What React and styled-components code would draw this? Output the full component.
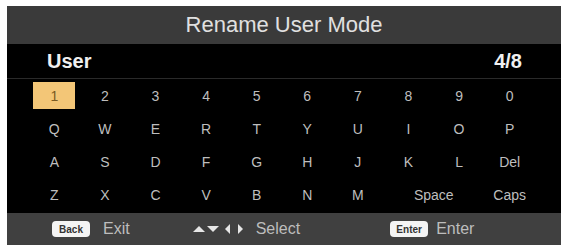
import React from "react";
import styled, { createGlobalStyle } from "styled-components";

const GlobalStyle = createGlobalStyle`
  body {
    margin: 0;
    background: #ffffff;
    font-family: "Liberation Sans", Arial, sans-serif;
  }
`;

const Panel = styled.div`
  width: 554px;
  margin: 6px 0 0 7px;
  background: #000;
`;

const Header = styled.div`
  height: 38px;
  background: #3a3a3a;
  color: #e0e0e0;
  font-size: 22px;
  display: flex;
  align-items: center;
  justify-content: center;
`;

const NameRow = styled.div`
  height: 34px;
  padding: 0 39px 0 40px;
  display: flex;
  align-items: center;
  justify-content: space-between;
  color: #f0f0f0;
  font-size: 20px;
  font-weight: bold;
  border-bottom: 1px solid #2a2a2a;
`;

const Keys = styled.div`
  display: grid;
  grid-template-columns: repeat(10, 50.6px);
  grid-auto-rows: 33px;
  padding: 0 0 2px 22px;
`;

const Key = styled.div`
  grid-column: span ${(p) => p.span || 1};
  display: flex;
  align-items: center;
  justify-content: center;
  color: #bebebe;
  font-size: 14px;
`;

const Selected = styled.span`
  width: 42px;
  height: 27px;
  background: #f3c677;
  color: #7a5a22;
  display: flex;
  align-items: center;
  justify-content: center;
`;

const Footer = styled.div`
  height: 32px;
  background: #404040;
  display: flex;
  align-items: center;
  padding-left: 45px;
  color: #bdbdbd;
  font-size: 16px;
`;

const Hint = styled.div`
  display: flex;
  align-items: center;
  gap: ${(p) => p.gap || 12}px;
  margin-left: ${(p) => p.offset || 0}px;
`;

const Badge = styled.span`
  height: 16px;
  padding: 0 4px;
  min-width: 30px;
  border-radius: 4px;
  background: #f4f4f4;
  color: #333;
  font-size: 10px;
  font-weight: bold;
  display: flex;
  align-items: center;
  justify-content: center;
`;

const Arrows = styled.svg`
  display: block;
`;

const rows = [
  ["1", "2", "3", "4", "5", "6", "7", "8", "9", "0"],
  ["Q", "W", "E", "R", "T", "Y", "U", "I", "O", "P"],
  ["A", "S", "D", "F", "G", "H", "J", "K", "L", "Del"],
  ["Z", "X", "C", "V", "B", "N", "M", ["Space", 2], "Caps"],
];

export default function App() {
  return (
    <>
      <GlobalStyle />
      <Panel>
        <Header>Rename User Mode</Header>
        <NameRow>
          <span>User</span>
          <span>4/8</span>
        </NameRow>
        <Keys>
          {rows.flat().map((k, i) => {
            const [label, span] = Array.isArray(k) ? k : [k, 1];
            return (
              <Key key={i} span={span}>
                {i === 0 ? <Selected>{label}</Selected> : label}
              </Key>
            );
          })}
        </Keys>
        <Footer>
          <Hint gap={13}>
            <Badge>Back</Badge>
            <span>Exit</span>
          </Hint>
          <Hint offset={62} gap={11}>
            <Arrows width="53" height="12" viewBox="0 0 53 12">
              <path d="M1 9 L7 3 L13 9 Z" fill="#e6e6e6" />
              <path d="M15 3 L27 3 L21 9 Z" fill="#e6e6e6" />
              <path d="M38 1 L33 6 L38 11 Z" fill="#e6e6e6" />
              <path d="M46 1 L51 6 L46 11 Z" fill="#e6e6e6" />
            </Arrows>
            <span>Select</span>
          </Hint>
          <Hint offset={90} gap={8}>
            <Badge>Enter</Badge>
            <span>Enter</span>
          </Hint>
        </Footer>
      </Panel>
    </>
  );
}
